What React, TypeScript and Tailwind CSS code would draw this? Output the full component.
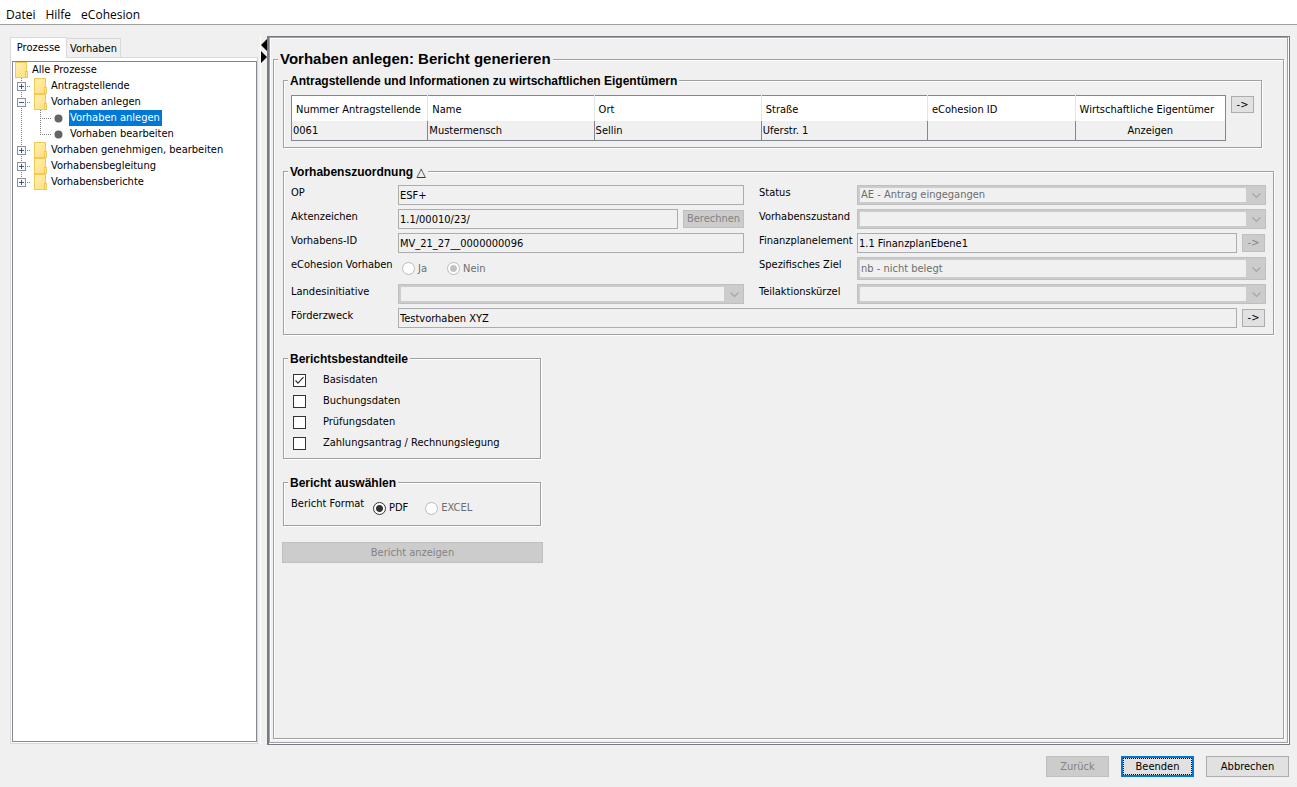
import React from 'react';

const cn = (...parts: (string | false | undefined)[]) => parts.filter(Boolean).join(' ');

const treeItems = [
  { name: 'Antragstellende', open: false },
  { name: 'Vorhaben anlegen', open: true, children: ['Vorhaben anlegen', 'Vorhaben bearbeiten'] },
  { name: 'Vorhaben genehmigen, bearbeiten', open: false },
  { name: 'Vorhabensbegleitung', open: false },
  { name: 'Vorhabensberichte', open: false },
];

const parts = ['Basisdaten', 'Buchungsdaten', 'Prüfungsdaten', 'Zahlungsantrag / Rechnungslegung'];

const FolderIcon = () => (
  <svg width="13" height="16" viewBox="0 0 13 16" className="shrink-0" shapeRendering="crispEdges">
    <defs>
      <linearGradient id="folder" x1="0" y1="0" x2="1" y2="1">
        <stop offset="0" stopColor="#fff0ae" />
        <stop offset="1" stopColor="#ffdf83" />
      </linearGradient>
    </defs>
    <rect x="0.5" y="0.5" width="11" height="15" fill="url(#folder)" stroke="#efcb55" />
    <rect x="10.5" y="9.5" width="2" height="6" fill="#ffe695" stroke="#efcb55" />
  </svg>
);

const Expander = ({ open, last }: { open: boolean; last: boolean }) => (
  <svg width="18" height="16" viewBox="0 0 18 16" className="shrink-0" shapeRendering="crispEdges">
    <path d={last ? 'M8.5 0V4' : 'M8.5 0V16'} stroke="#808080" strokeDasharray="1 1" />
    <path d="M14 8.5H18" stroke="#808080" strokeDasharray="1 1" />
    <rect x="4.5" y="4.5" width="8" height="8" rx="1" fill="#f8f8f8" stroke="#919191" />
    <path d={open ? 'M6 8.5H11' : 'M6 8.5H11M8.5 6V11'} stroke="#3b56a5" />
  </svg>
);

const LeafLines = ({ last }: { last: boolean }) => (
  <svg width="56" height="16" viewBox="0 0 56 16" className="shrink-0">
    <g shapeRendering="crispEdges" stroke="#808080" strokeDasharray="1 1">
      <path d="M8.5 0V16" />
      <path d={last ? 'M27.5 0V8' : 'M27.5 0V16'} />
      <path d="M27 8.5H38" />
    </g>
    <circle cx="45.5" cy="8.5" r="4" fill="#646464" />
  </svg>
);

type GroupProps = { title: React.ReactNode; className?: string; large?: boolean; children: React.ReactNode };

const Group = ({ title, className, large, children }: GroupProps) => (
  <fieldset className={cn('min-w-0 border border-[#a0a0a0] shadow-[1px_1px_0_#fff,inset_1px_1px_0_#fff]', className)}>
    <legend
      className={cn(
        'bg-[#f0f0f0] px-0.5 font-["Liberation_Sans",Arial,sans-serif] font-bold',
        large ? '-ml-[5px] text-[15px] leading-[18px]' : '-ml-[3px] pt-0.5 text-[12px] leading-3'
      )}
    >
      {title}
    </legend>
    {children}
  </fieldset>
);

type ButtonProps = React.ButtonHTMLAttributes<HTMLButtonElement> & { primary?: boolean };

const Button = ({ className, primary, ...props }: ButtonProps) => (
  <button
    type="button"
    className={cn(
      'flex shrink-0 items-center justify-center bg-[#e1e1e1]',
      primary
        ? 'border-2 border-[#0078d7] outline-1 -outline-offset-3 outline-black outline-dotted'
        : 'border border-[#adadad] disabled:border-[#bfbfbf] disabled:bg-[#cccccc] disabled:text-[#838383]',
      className
    )}
    {...props}
  />
);

const TextField = ({ id, value }: { id: string; value: string }) => (
  <input
    id={id}
    type="text"
    readOnly
    value={value}
    className="h-5 w-full min-w-0 flex-1 border border-[#abadb3] bg-[#f0f0f0] px-px outline-none"
  />
);

const SelectField = ({ id, value, tall }: { id: string; value?: string; tall?: boolean }) => (
  <div className={cn('relative flex w-full border border-[#bfbfbf] bg-[#cccccc] p-0.5 pr-[19px]', tall ? 'h-[23px]' : 'h-5')}>
    <select id={id} disabled className="w-full appearance-none bg-[#f0f0f0] px-px text-[#6d6d6d] opacity-100">
      <option>{value}</option>
    </select>
    <svg width="9" height="6" viewBox="0 0 9 6" className="pointer-events-none absolute top-1/2 right-1 -mt-0.5" fill="none">
      <path d="M0.5 0.5L4.5 4.5L8.5 0.5" stroke="#a5a5a5" strokeWidth="1.2" />
    </svg>
  </div>
);

type RadioProps = { name: string; label: string; checked?: boolean; disabled?: boolean };

const Radio = ({ name, label, checked, disabled }: RadioProps) => (
  <label className={cn('flex items-center gap-[3px]', disabled && 'text-[#6d6d6d]')}>
    <input
      type="radio"
      name={name}
      defaultChecked={checked}
      disabled={disabled}
      className="h-[13px] w-[13px] appearance-none rounded-full border border-[#333] bg-white bg-clip-padding checked:bg-[radial-gradient(circle,#333_3px,#fff_4px)] disabled:border-[#bcbcbc] disabled:checked:bg-[radial-gradient(circle,#c3c3c3_3px,#fff_4px)]"
    />
    {label}
  </label>
);

const Checkbox = ({ label, checked }: { label: string; checked: boolean }) => (
  <label className="flex h-[21px] gap-[17px] pl-0.5">
    <span className="relative mt-1 h-[13px] w-[13px]">
      <input type="checkbox" defaultChecked={checked} className="peer block h-[13px] w-[13px] appearance-none border border-[#333] bg-white" />
      <svg width="13" height="13" viewBox="0 0 13 13" fill="none" className="pointer-events-none absolute inset-0 hidden peer-checked:block">
        <path d="M2.5 6.5L5 9.2L10.5 3.2" stroke="#333" strokeWidth="1.2" />
      </svg>
    </span>
    <span className="pt-[3px]">{label}</span>
  </label>
);

const Label = ({ htmlFor, className, children }: { htmlFor?: string; className?: string; children: React.ReactNode }) => (
  <label htmlFor={htmlFor} className={cn('self-start pt-px leading-[14px] whitespace-nowrap', className)}>
    {children}
  </label>
);

const Sidebar = () => (
  <aside className="my-px flex w-[248px] shrink-0 flex-col">
    <div role="tablist" className="flex items-end">
      <button role="tab" aria-selected="true" className="z-10 -mb-px h-[21px] w-[57px] border border-b-0 border-[#d9d9d9] bg-white">
        Prozesse
      </button>
      <button role="tab" aria-selected="false" className="-ml-px h-[19px] w-[55px] border border-b-0 border-[#d9d9d9] pt-0.5">
        Vorhaben
      </button>
    </div>
    <div className="flex flex-1 flex-col border border-[#d9d9d9] bg-white pt-[3px] pb-px pl-px">
      <ul role="tree" className="flex-1 border border-[#828790] bg-white whitespace-nowrap">
        <li role="treeitem" className="flex h-4 items-center gap-1 pl-0.5">
          <FolderIcon />
          Alle Prozesse
        </li>
        {treeItems.map((item, i) => (
          <li key={item.name} role="treeitem" aria-expanded={item.open}>
            <div className="flex h-4 items-center">
              <Expander open={item.open} last={i === treeItems.length - 1} />
              <span className="pl-[3px]">
                <FolderIcon />
              </span>
              <span className="pl-1">{item.name}</span>
            </div>
            {item.children && (
              <ul role="group">
                {item.children.map((child, j) => (
                  <li key={child} role="treeitem" aria-selected={j === 0} className="flex h-4 items-center">
                    <LeafLines last={j === 1} />
                    <span className={cn('h-4 pr-0.5 pl-px leading-4', j === 0 && 'bg-[#0078d7] text-white')}>{child}</span>
                  </li>
                ))}
              </ul>
            )}
          </li>
        ))}
      </ul>
    </div>
  </aside>
);

const ApplicantTable = () => (
  <table className="w-full table-fixed border-collapse border border-[#828790] text-left">
    <colgroup>
      <col className="w-[14.6%]" />
      <col className="w-[17.8%]" />
      <col className="w-[17.9%]" />
      <col className="w-[17.8%]" />
      <col className="w-[15.8%]" />
      <col />
    </colgroup>
    <thead>
      <tr className="h-[25px] bg-white">
        {['Nummer Antragstellende', 'Name', 'Ort', 'Straße', 'eCohesion ID', 'Wirtschaftliche Eigentümer'].map((head) => (
          <th key={head} className="border-r border-[#e5e5e5] px-1 pt-1 font-normal whitespace-nowrap last:border-[#828790]">
            {head}
          </th>
        ))}
      </tr>
    </thead>
    <tbody>
      <tr className="h-5">
        {['0061', 'Mustermensch', 'Sellin', 'Uferstr. 1', '', 'Anzeigen'].map((cell, i) => (
          <td key={i} className="border-r border-[#828790] px-px pt-0.5 last:text-center">
            {cell}
          </td>
        ))}
      </tr>
    </tbody>
  </table>
);

const AssignmentFields = () => (
  <div className="grid grid-cols-[107px_346fr_113px_409fr] gap-y-1">
    <Label htmlFor="op">OP</Label>
    <TextField id="op" value="ESF+" />
    <Label htmlFor="status" className="pl-[15px]">Status</Label>
    <SelectField id="status" value="AE - Antrag eingegangen" />

    <Label htmlFor="akz">Aktenzeichen</Label>
    <div className="flex items-center gap-[5px]">
      <TextField id="akz" value="1.1/00010/23/" />
      <Button disabled className="h-[18px] w-[61px]">Berechnen</Button>
    </div>
    <Label htmlFor="zustand" className="pl-[15px]">Vorhabenszustand</Label>
    <SelectField id="zustand" />

    <Label htmlFor="vid">Vorhabens-ID</Label>
    <TextField id="vid" value="MV_21_27__0000000096" />
    <Label htmlFor="fpe" className="pl-[15px]">Finanzplanelement</Label>
    <div className="flex items-center gap-[5px] pr-px">
      <TextField id="fpe" value="1.1 FinanzplanEbene1" />
      <Button disabled className="h-[18px] w-[23px]">-&gt;</Button>
    </div>

    <Label>eCohesion Vorhaben</Label>
    <div className="flex items-center gap-5 pl-1">
      <Radio name="ecohesion" label="Ja" disabled />
      <Radio name="ecohesion" label="Nein" checked disabled />
    </div>
    <Label htmlFor="ziel" className="pl-[15px]">Spezifisches Ziel</Label>
    <SelectField id="ziel" value="nb - nicht belegt" tall />

    <Label htmlFor="initiative">Landesinitiative</Label>
    <SelectField id="initiative" />
    <Label htmlFor="teilaktion" className="pl-[15px]">Teilaktionskürzel</Label>
    <SelectField id="teilaktion" />

    <Label htmlFor="zweck">Förderzweck</Label>
    <div className="col-span-3 flex items-center gap-[5px] pr-px">
      <TextField id="zweck" value="Testvorhaben XYZ" />
      <Button className="h-[18px] w-[23px]">-&gt;</Button>
    </div>
  </div>
);

const App = () => {
  return (
    <div className="flex min-h-screen flex-col bg-[#f0f0f0] font-['DejaVu_Sans_Condensed','DejaVu_Sans',sans-serif] text-[11px] leading-[14px] text-black">
      <nav className="flex h-[25px] items-center gap-2.5 border-b border-[#a0a0a0] bg-white px-1.5 pt-1.5 font-['Open_Sans',sans-serif] text-[12px]">
        <a href="#datei">Datei</a>
        <a href="#hilfe">Hilfe</a>
        <a href="#ecohesion">eCohesion</a>
      </nav>

      <div className="flex flex-1 pt-[11px] pr-[7px] pl-2.5">
        <Sidebar />

        <div className="ml-0.5 flex w-[7px] shrink-0 flex-col border-l border-white pt-[3px]">
          <svg width="7" height="24" viewBox="0 0 7 24">
            <path d="M6 0V12L0 6ZM0 12V24L6 18Z" fill="#000" />
          </svg>
        </div>

        <main className="flex min-w-0 flex-1 border border-l-2 border-[#777b83] bg-white pr-px pb-px">
          <div className="flex min-w-0 flex-1 border border-[#a0a0a0] bg-[#f0f0f0] pt-3 pr-[3px] pb-[3px] pl-[3px] shadow-[inset_1px_1px_0_#fff]">
            <Group large title="Vorhaben anlegen: Bericht generieren" className="flex-1 px-[9px] pt-[5px]">
              <div className="flex flex-col gap-4">
                <Group title="Antragstellende und Informationen zu wirtschaftlichen Eigentümern" className="mr-3 px-[7px] pt-2 pb-1.5">
                  <div className="flex items-start gap-[5px]">
                    <ApplicantTable />
                    <Button className="mt-px h-[17px] w-[23px]">-&gt;</Button>
                  </div>
                </Group>

                <Group
                  title={<>Vorhabenszuordnung <span className="font-['DejaVu_Sans',sans-serif]">△</span></>}
                  className="px-[7px] pt-[7px] pb-1.5"
                >
                  <AssignmentFields />
                </Group>

                <Group title="Berichtsbestandteile" className="w-[258px] px-[7px] pt-[5px] pb-1">
                  {parts.map((part, i) => (
                    <Checkbox key={part} label={part} checked={i === 0} />
                  ))}
                </Group>

                <Group title="Bericht auswählen" className="w-[258px] px-[7px] pt-[7px] pb-2.5">
                  <div className="flex h-[19px] items-end">
                    <span className="w-[82px] self-start pt-px">Bericht Format</span>
                    <div className="flex gap-[17px]">
                      <Radio name="format" label="PDF" checked />
                      <Radio name="format" label="EXCEL" disabled />
                    </div>
                  </div>
                </Group>

                <Button disabled className="-ml-px h-[21px] w-[261px]">Bericht anzeigen</Button>
              </div>
            </Group>
          </div>
        </main>
      </div>

      <footer className="flex justify-end gap-3 px-2 pt-[11px] pb-2.5">
        <Button disabled className="h-[21px] w-[63px]">Zurück</Button>
        <Button primary className="h-[21px] w-[73px]">Beenden</Button>
        <Button className="h-[21px] w-[83px]">Abbrechen</Button>
      </footer>
    </div>
  );
};

export default App;
